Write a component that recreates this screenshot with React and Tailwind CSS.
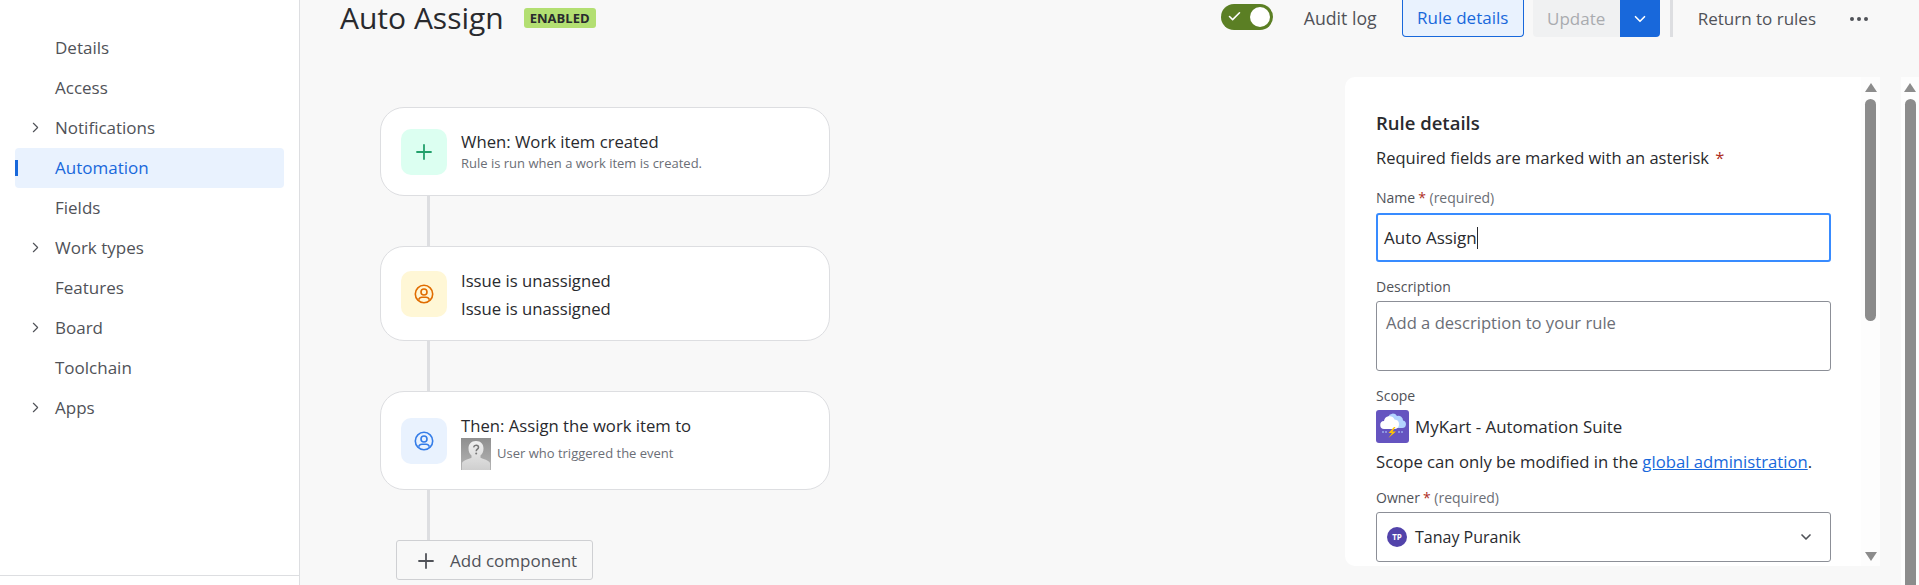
import React from 'react';
import { ChevronRight, ChevronDown, Check, Plus, MoreHorizontal } from 'lucide-react';

const navItems = [
  { label: 'Details' },
  { label: 'Access' },
  { label: 'Notifications', expandable: true },
  { label: 'Automation', active: true },
  { label: 'Fields' },
  { label: 'Work types', expandable: true },
  { label: 'Features' },
  { label: 'Board', expandable: true },
  { label: 'Toolchain' },
  { label: 'Apps', expandable: true },
];

// Atlassian style person-in-circle icon
const PersonIcon = ({ className }) => (
  <svg className={className} width="20" height="20" viewBox="0 0 20 20" fill="none" stroke="currentColor" strokeWidth="1.6">
    <circle cx="10" cy="10" r="8.7" />
    <circle cx="10" cy="8" r="3" />
    <path d="M4.6 15.6c.6-1.6 1.8-2.4 3.2-2.4h4.4c1.4 0 2.6.8 3.2 2.4" />
  </svg>
);

const UnknownAvatar = () => (
  <svg width="30" height="32" viewBox="0 0 30 32" className="shrink-0">
    <defs>
      <linearGradient id="avatarBg" x1="0" y1="0" x2="0" y2="1">
        <stop offset="0" stopColor="#8f8f8f" />
        <stop offset="1" stopColor="#b5b5b5" />
      </linearGradient>
      <linearGradient id="avatarFg" x1="0" y1="0" x2="0" y2="1">
        <stop offset="0" stopColor="#f0f0f0" />
        <stop offset="1" stopColor="#cfcfcf" />
      </linearGradient>
    </defs>
    <rect width="30" height="32" fill="url(#avatarBg)" />
    <path d="M15 3c5 0 7.5 3.4 7.5 7.4 0 3-1.2 5.6-3 7.2v2.2c2.6 1.2 8.5 2.4 9.5 5.2V32H1v-7c1-2.8 6.9-4 9.5-5.2v-2.2c-1.8-1.6-3-4.2-3-7.2C7.500 6.400 10 3 15 3z" fill="url(#avatarFg)" />
    <path d="M12.600 9.300c.3-1.400 1.300-2 2.500-2 1.400 0 2.400.9 2.400 2.100 0 1.700-2.300 1.900-2.300 3.800" fill="none" stroke="#777" strokeWidth="1.500" />
    <circle cx="15.200" cy="15.600" r="1" fill="#777" />
  </svg>
);

const ProjectIcon = () => (
  <svg width="33" height="33" viewBox="0 0 33 33" className="shrink-0">
    <rect width="33" height="33" rx="3" fill="#6554c0" />
    <path d="M12 7a5 5 0 0 1 9-1 4.500 4.500 0 0 1 6 4.500 3.800 3.800 0 0 1-1 7.500H14z" fill="#b3d4ff" />
    <path d="M8.500 19a4 4 0 0 1-.5-8 5.500 5.500 0 0 1 10.500-1.500 4.800 4.800 0 0 1 4.500 4.800A4.700 4.700 0 0 1 19 19z" fill="#ffffff" />
    <path d="M18 17l-5.500 6h3.500l-3.500 5 7.500-6.500h-3.500l3-4.500z" fill="#ffc400" />
    <path d="M7 21v2M10 21v2M23 21v2M26 21v2" stroke="#b3d4ff" strokeWidth="1" />
  </svg>
);

const FlowCard = ({ height, iconBox, icon, title, children, contentClass = '' }) => (
  <div className={`w-[450px] ${height} bg-white border border-[#dddee1] rounded-[24px] pl-[20px] flex items-center gap-[14px]`}>
    <div className={`w-[46px] h-[46px] rounded-[10px] flex items-center justify-center shrink-0 ${iconBox}`}>{icon}</div>
    <div className={`min-w-0 ${contentClass}`}>
      <div className="text-[16.7px] leading-[22px] text-[#292a2e]">{title}</div>
      {children}
    </div>
  </div>
);

const Connector = ({ height }) => <div className={`w-[3px] ${height} bg-[#dddee1] ml-[47px]`} />;

const FieldLabel = ({ children }) => (
  <div className="text-[14px] leading-[16px] font-medium text-[#505258]">{children}</div>
);

const RequiredMark = () => <span className="ml-[3px] text-[#ae2e24]">*</span>;

const ArrowUp = () => <div className="w-0 h-0 border-x-[6px] border-x-transparent border-b-[9px] border-b-[#8c8c8c]" />;
const ArrowDown = () => <div className="w-0 h-0 border-x-[6px] border-x-transparent border-t-[9px] border-t-[#8c8c8c]" />;

const App = () => {
  return (
    <div className="w-[1919px] h-[585px] overflow-hidden flex bg-[#f8f8f8] text-[#292a2e] font-['Open_Sans',sans-serif]">
      {/* Sidebar */}
      <aside className="w-[300px] h-full shrink-0 bg-white border-r border-[#dddee1] flex flex-col">
        <nav className="pt-[28px] pl-[15px] pr-[15px] flex-1">
          {navItems.map((item) => (
            <div
              key={item.label}
              className={`relative h-[40px] rounded-[4px] pl-[40px] flex items-center text-[17px] font-medium ${
                item.active ? 'bg-[#e9f2fe] text-[#1868db]' : 'text-[#505258]'
              }`}
            >
              {item.active && <span className="absolute left-0 top-[12px] w-[3px] h-[16px] bg-[#1868db]" />}
              {item.expandable && (
                <ChevronRight className="absolute left-[12px] top-[11px] text-[#505258]" size={17} strokeWidth={1.6} />
              )}
              {item.label}
            </div>
          ))}
        </nav>
        <div className="h-[10px] border-t border-[#dddee1]" />
      </aside>

      {/* Main */}
      <main className="flex-1 min-w-0 flex flex-col">
        {/* Header */}
        <header className="h-[77px] shrink-0 pl-[40px] pr-[48px] flex items-start justify-between">
          <div className="flex items-center h-[36px] gap-[20px]">
            <h1 className="text-[30px] leading-[36px] font-medium text-[#292a2e]">Auto Assign</h1>
            <span className="h-[20px] px-[6px] rounded-[3px] bg-[#b3df72] text-[#292a2e] text-[13px] leading-[20px] font-bold">ENABLED</span>
          </div>
          <div className="flex items-start">
            <div className="relative w-[52px] h-[26px] mt-[4px] rounded-full bg-[#5b7f24]">
              <Check className="absolute left-[6px] top-[5px] text-white" size={15} strokeWidth={2.5} />
              <span className="absolute right-[3px] top-[3px] w-[20px] h-[20px] rounded-full bg-white" />
            </div>
            <div className="ml-[31px] h-[37px] flex items-center text-[17.7px] font-medium text-[#505258]">Audit log</div>
            <div className="ml-[25px] w-[122px] h-[37px] flex items-center justify-center rounded-b-[4px] border border-t-0 border-[#1868db] bg-[#e9f2fe] text-[#1868db] text-[17px] font-medium">Rule details</div>
            <div className="ml-[9px] flex">
              <div className="w-[87px] h-[37px] flex items-center justify-center rounded-bl-[4px] bg-[#f0f1f2] text-[#a9abaf] text-[17px] font-medium">Update</div>
              <div className="w-[40px] h-[37px] flex items-center justify-center rounded-br-[4px] bg-[#1868db] text-white">
                <ChevronDown size={18} strokeWidth={2.2} />
              </div>
            </div>
            <div className="ml-[10px] w-[3px] h-[37px] bg-[#dddee1]" />
            <div className="ml-[25px] h-[37px] flex items-center text-[17px] font-medium text-[#505258]">Return to rules</div>
            <div className="ml-[31px] h-[37px] flex items-center text-[#505258]">
              <MoreHorizontal size={24} strokeWidth={2} />
            </div>
          </div>
        </header>

        {/* Body */}
        <div className="flex-1 min-h-0 flex">
          <section className="w-[1045px] shrink-0 pl-[80px] pt-[30px]">
            <FlowCard
              height="h-[89px]"
              iconBox="bg-[#dcfff1]"
              icon={<Plus className="text-[#22a06b]" size={24} strokeWidth={1.8} />}
              title="When: Work item created"
            >
              <div className="text-[13px] leading-[20px] text-[#6b6e76]">Rule is run when a work item is created.</div>
            </FlowCard>
            <Connector height="h-[50px]" />
            <FlowCard
              height="h-[95px]"
              iconBox="bg-[#fff7d6]"
              icon={<PersonIcon className="text-[#e06c00]" />}
              title="Issue is unassigned"
              contentClass="pt-[2px]"
            >
              <div className="text-[16.7px] leading-[22px] mt-[6px] text-[#292a2e]">Issue is unassigned</div>
            </FlowCard>
            <Connector height="h-[50px]" />
            <FlowCard
              height="h-[99px]"
              iconBox="bg-[#e9f2fe]"
              icon={<PersonIcon className="text-[#357de8]" />}
              title="Then: Assign the work item to"
              contentClass="pt-[4px]"
            >
              <div className="flex items-center gap-[6px] mt-[1px]">
                <UnknownAvatar />
                <span className="text-[13px] text-[#6b6e76]">User who triggered the event</span>
              </div>
            </FlowCard>
            <Connector height="h-[50px]" />
            <button className="ml-[16px] w-[197px] h-[40px] flex items-center pl-[17px] pt-[2px] gap-[12px] rounded-[3px] border border-[#cfd0d3] bg-[#f8f8f8] text-[#505258] text-[17px] font-medium">
              <Plus size={24} strokeWidth={1.8} />
              Add component
            </button>
          </section>

          {/* Rule details panel */}
          <div className="flex h-[489px] shrink-0">
            <div className="w-[516px] h-full overflow-hidden rounded-l-[10px] bg-white pt-[34px] pl-[31px] pr-[30px]">
              <h2 className="text-[18.5px] leading-[24px] font-semibold text-[#292a2e]">Rule details</h2>
              <p className="mt-[11px] text-[16.5px] leading-[24px] text-[#292a2e]">
                Required fields are marked with an asterisk <span className="ml-[2px] text-[#ae2e24]">*</span>
              </p>
              <div className="mt-[20px]">
                <FieldLabel>
                  Name<RequiredMark /> <span className="font-normal text-[#6b6e76]">(required)</span>
                </FieldLabel>
              </div>
              <div className="mt-[7px] h-[49px] rounded-[3px] border-2 border-[#388bff] pl-[6px] flex items-center text-[17px] text-[#292a2e]">
                Auto Assign
                <span className="w-px h-[22px] bg-[#292a2e]" />
              </div>
              <div className="mt-[17px]">
                <FieldLabel>Description</FieldLabel>
              </div>
              <div className="mt-[6px] h-[70px] rounded-[3px] border border-[#8c8f97] pl-[9px] pt-[9px] text-[16.6px] leading-[24px] text-[#6b6e76]">
                Add a description to your rule
              </div>
              <div className="mt-[17px]">
                <FieldLabel>Scope</FieldLabel>
              </div>
              <div className="mt-[6px] flex items-center gap-[6px] text-[16.9px] text-[#292a2e]">
                <ProjectIcon />
                MyKart - Automation Suite
              </div>
              <p className="mt-[7px] text-[16.7px] leading-[24px] text-[#292a2e]">
                Scope can only be modified in the <a className="text-[#1868db] underline">global administration</a>.
              </p>
              <div className="mt-[16px]">
                <FieldLabel>
                  Owner<RequiredMark /> <span className="font-normal text-[#6b6e76]">(required)</span>
                </FieldLabel>
              </div>
              <div className="mt-[6px] h-[50px] rounded-[3px] border border-[#8c8f97] pl-[10px] pr-[16px] flex items-center text-[16px] text-[#292a2e]">
                <span className="w-[20px] h-[20px] rounded-full bg-[#5243aa] text-white text-[8px] font-bold flex items-center justify-center mr-[8px]">TP</span>
                Tanay Puranik
                <ChevronDown className="ml-auto text-[#505258]" size={16} strokeWidth={2.5} />
              </div>
            </div>
            {/* Panel scrollbar */}
            <div className="w-[19px] h-full bg-[#fdfdfd] flex flex-col items-center pt-[6px] pb-[5px] shrink-0">
              <ArrowUp />
              <div className="mt-[7px] w-[11px] h-[222px] rounded-full bg-[#8c8c8c]" />
              <div className="mt-auto">
                <ArrowDown />
              </div>
            </div>
          </div>
          {/* Page scrollbar */}
          <div className="ml-[21px] w-[18px] h-full bg-[#fdfdfd] flex flex-col items-center pt-[6px] shrink-0">
            <ArrowUp />
            <div className="mt-[7px] w-[11px] flex-1 rounded-t-full bg-[#8c8c8c]" />
          </div>
        </div>
      </main>
    </div>
  );
};

export default App;
